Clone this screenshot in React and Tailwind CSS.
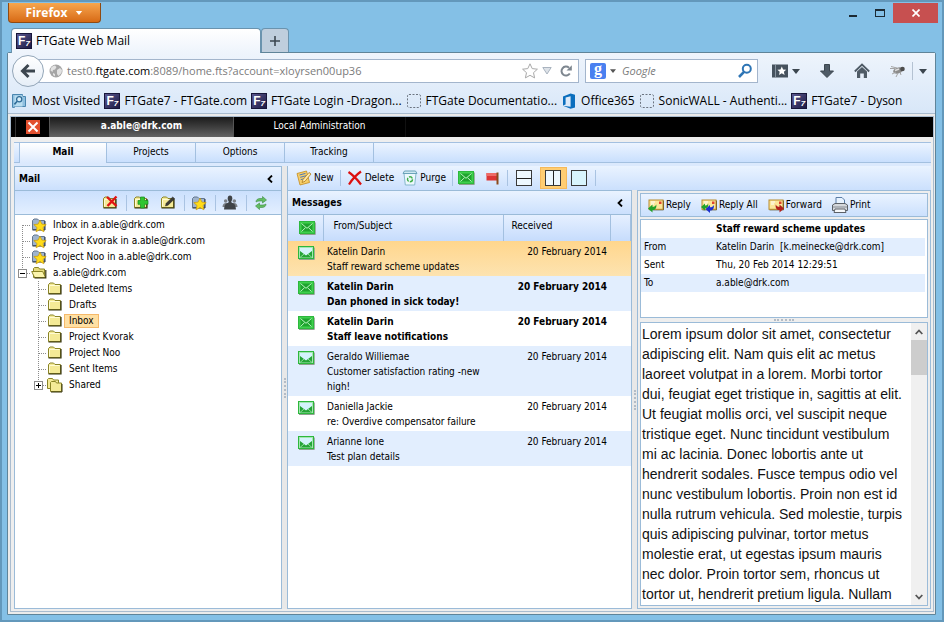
import React from 'react';

// bookmarks toolbar entries
const bookmarks = [
  { label: 'Most Visited', icon: 'visited' },
  { label: 'FTGate7 - FTGate.com', icon: 'ft' },
  { label: 'FTGate Login -Dragon...', icon: 'ft' },
  { label: 'FTGate Documentatio...', icon: 'blank' },
  { label: 'Office365', icon: 'office' },
  { label: 'SonicWALL - Authenti...', icon: 'blank' },
  { label: 'FTGate7 - Dyson', icon: 'ft' },
];

// folder tree, level 1 rows are indented one cell
const folders = [
  { name: 'Inbox in a.able@drk.com', level: 0, icon: 'star', branch: 'first' },
  { name: 'Project Kvorak in a.able@drk.com', level: 0, icon: 'star', branch: 'mid' },
  { name: 'Project Noo in a.able@drk.com', level: 0, icon: 'star', branch: 'mid' },
  { name: 'a.able@drk.com', level: 0, icon: 'open', branch: 'minus' },
  { name: 'Deleted Items', level: 1, icon: 'folder', branch: 'mid' },
  { name: 'Drafts', level: 1, icon: 'folder', branch: 'mid' },
  { name: 'Inbox', level: 1, icon: 'folder', branch: 'mid', selected: true },
  { name: 'Project Kvorak', level: 1, icon: 'folder', branch: 'mid' },
  { name: 'Project Noo', level: 1, icon: 'folder', branch: 'mid' },
  { name: 'Sent Items', level: 1, icon: 'folder', branch: 'mid' },
  { name: 'Shared', level: 1, icon: 'multi', branch: 'plus' },
];

const messages = [
  { from: 'Katelin Darin', subject: 'Staff reward scheme updates', date: '20 February 2014', read: true, selected: true },
  { from: 'Katelin Darin', subject: 'Dan phoned in sick today!', date: '20 February 2014', read: false },
  { from: 'Katelin Darin', subject: 'Staff leave notifications', date: '20 February 2014', read: false },
  { from: 'Geraldo Williemae', subject: 'Customer satisfaction rating -new high!', date: '20 February 2014', read: true },
  { from: 'Daniella Jackie', subject: 're: Overdive compensator failure', date: '20 February 2014', read: true },
  { from: 'Arianne Ione', subject: 'Test plan details', date: '20 February 2014', read: true },
];

const details = [
  { label: 'From', value: 'Katelin Darin\u00a0 [k.meinecke@drk.com]' },
  { label: 'Sent', value: 'Thu, 20 Feb 2014 12:29:51' },
  { label: 'To', value: 'a.able@drk.com' },
];

const bodyText =
  'Lorem ipsum dolor sit amet, consectetur adipiscing elit. Nam quis elit ac metus laoreet volutpat in a lorem. Morbi tortor dui, feugiat eget tristique in, sagittis at elit. Ut feugiat mollis orci, vel suscipit neque tristique eget. Nunc tincidunt vestibulum mi ac lacinia. Donec lobortis ante ut hendrerit sodales. Fusce tempus odio vel nunc vestibulum lobortis. Proin non est id nulla rutrum vehicula. Sed molestie, turpis quis adipiscing pulvinar, tortor metus molestie erat, ut egestas ipsum mauris nec dolor. Proin tortor sem, rhoncus ut tortor ut, hendrerit pretium ligula. Nullam';

/* ---------- icons ---------- */

function FtLogo() {
  return (
    <span className="flex h-4 w-4 shrink-0 items-center justify-center border border-[#17163a] bg-linear-to-br from-[#5c5990] to-[#1d1b45] font-['Liberation_Sans'] text-xs leading-none font-bold text-white">
      F<span className="self-end text-[8px] leading-none italic">7</span>
    </span>
  );
}

function BookmarkIcon({ kind }) {
  if (kind === 'ft') return <FtLogo />;
  if (kind === 'blank') {
    return (
      <svg className="h-4 w-4 shrink-0" viewBox="0 0 16 16">
        <rect x="1.5" y="1.5" width="13" height="13" rx="1.5" fill="none" stroke="#6c7480" strokeDasharray="2 1.5" />
      </svg>
    );
  }
  if (kind === 'office') {
    return (
      <svg className="h-4 w-4 shrink-0" viewBox="0 0 16 16">
        <path d="M2 3.6 9.6.4 14 1.8v12.6L9.6 15.7 2 12.7l7.6 1V3.3L4.6 4.5v6.9L2 12.5z" fill="#0a6ebd" />
      </svg>
    );
  }
  return (
    <svg className="h-4 w-4 shrink-0" viewBox="0 0 16 16">
      <path d="M.5 1.5h10v2h3v10H2.5v.9H.5z" fill="#8fc0e0" stroke="#4a86b0" />
      <path d="M2.5 13.5V2.5h8v11" fill="#b9ddf0" />
      <circle cx="7.2" cy="6.3" r="2.6" fill="#d8eefa" stroke="#2f6c98" strokeWidth="1.3" />
      <path d="M5.2 8.3 2.4 11.4" stroke="#2f6c98" strokeWidth="1.6" />
    </svg>
  );
}

// small downward triangle
function Caret({ className }) {
  return (
    <svg className={className} viewBox="0 0 8 5">
      <path d="M0 0h8L4 5z" fill="currentColor" />
    </svg>
  );
}

function Folder() {
  return (
    <>
      <path d="M1.5 12.5V3.500l1.500-1.500h3.500L8 3.500h5.500v9z" fill="#f4ea96" stroke="#8a8426" />
      <path d="M2.5 11.5V4.500h10" fill="none" stroke="#fffbd2" />
      <path d="M1.5 13h12.500V4" fill="none" stroke="#35330c" strokeWidth="1.200" />
    </>
  );
}

function FolderIcon({ kind }) {
  return (
    <svg className="h-4 w-4 shrink-0" viewBox="0 0 16 16">
      {kind === 'folder' && <Folder />}
      {kind === 'star' && (
        <>
          <path d="M1.5 12.5v-9L3 2h3.500L8 3.500h5.500v9z" fill="#9fb4cd" stroke="#62768f" />
          <path d="M1.5 13h12.500V4" fill="none" stroke="#2d3744" />
          <path d="m9 3.200 1.900 3.900 4.300.5-3.200 2.900.9 4.300L9 12.600l-3.900 2.200.9-4.300-3.200-2.900 4.300-.5z" fill="#ffdc1a" stroke="#c79a08" strokeWidth=".7" />
        </>
      )}
      {kind === 'open' && (
        <>
          <path d="M2.5 12.5v-9l1-1h4l1 1.500h5v8.500z" fill="#e5da7c" stroke="#8a8426" />
          <path d="M.7 6.5h11l2.8 6H3.6z" fill="#fbf4ac" stroke="#8a8426" />
          <path d="M3.5 13h11.300V5" fill="none" stroke="#35330c" strokeWidth="1.200" />
        </>
      )}
      {kind === 'multi' && (
        <>
          <path d="M.5 11.5v-9l1-1h4l1 1.500h5v8.500z" fill="#f4ea96" stroke="#8a8426" />
          <path d="M3.5 14.5v-9l1-1h4l1 1.500h5v8.500z" fill="#f4ea96" stroke="#8a8426" />
          <path d="M4 15h11V7" fill="none" stroke="#35330c" />
        </>
      )}
      {kind === 'delete' && (
        <>
          <Folder />
          <path d="m5 2 9.500 9M14.500 1.500 5.500 11" stroke="#e01414" strokeWidth="2.400" />
        </>
      )}
      {kind === 'add' && (
        <>
          <Folder />
          <path d="M7.500 5.500V2h4v3.500H15v3.800h-3.500V13h-4V9.300H5V5.500z" fill="#2fc531" stroke="#158a1b" strokeWidth=".7" />
        </>
      )}
      {kind === 'edit' && (
        <>
          <Folder />
          <path d="m5.500 11 .7-2.700L12.700 2l2 1.700L8 10.200z" fill="#3c3c34" stroke="#222" strokeWidth=".5" />
        </>
      )}
    </svg>
  );
}

// dotted connector in front of a tree row
function Branch({ kind }) {
  const box = kind === 'minus' || kind === 'plus';
  return (
    <svg className="h-4 w-4 shrink-0" viewBox="0 0 16 16">
      {kind === 'mid' && <path d="M7.5 0v16" stroke="#8c8c8c" strokeDasharray="1 1" />}
      {kind === 'first' && <path d="M7.5 8v8" stroke="#8c8c8c" strokeDasharray="1 1" />}
      {box && <path d="M7.5 0v4" stroke="#8c8c8c" strokeDasharray="1 1" />}
      <path d={box ? 'M12 8.5h4' : 'M8 8.5h8'} stroke="#8c8c8c" strokeDasharray="1 1" />
      {box && <rect x="3.5" y="4.5" width="8" height="8" fill="#fff" stroke="#8c8c8c" />}
      {box && <path d="M5 8.5h5" stroke="#000" />}
      {kind === 'plus' && <path d="M7.5 6v5" stroke="#000" />}
    </svg>
  );
}

function Envelope({ open }) {
  return (
    <svg className="block h-4 w-[18px] shrink-0" viewBox="0 0 18 16">
      <path d="M2 14.500h15.300V2.500" fill="none" stroke="#8fa08f" />
      <rect x="1.500" y="1.500" width="15" height="12" fill={open ? '#a5e6b2' : '#3fcf4d'} stroke="#2db83d" />
      {open ? (
        <>
          <path d="M3 3h12v3.500L9 11 3 6.500z" fill="#d3f3fb" />
          <path d="M3 6 9 10.500 15 6v6.500H3z" fill="#25a336" />
          <path d="m3 12.500 4-3.500M15 12.500 11 9" stroke="#8fe09b" />
        </>
      ) : (
        <>
          <path d="M3.500 3.500h11v8h-11z" fill="#1fa42f" />
          <path d="m3.500 3.500 5.500 4.800 5.500-4.800M3.500 11.500l4-3.800M14.500 11.500l-4-3.800" fill="none" stroke="#b9f5c0" />
        </>
      )}
    </svg>
  );
}

// shared letter card used by reply / reply all / forward
function Letter({ children }) {
  return (
    <svg className="h-4 w-4 shrink-0" viewBox="0 0 16 16">
      <path d="M1.5 12.8h14V3.5" fill="none" stroke="#4b4320" />
      <rect x="1" y="3" width="14" height="9.3" fill="#fbe79a" stroke="#b98b2c" />
      <path d="M3 5h4M3 7h3" stroke="#fff" />
      <path d="M11 4.5h2.5v2.5H11z" fill="#e0452c" />
      {children}
    </svg>
  );
}

const ReplyIcon = () => (
  <Letter>
    <path d="M0 11.5 4.5 7.5v2.3c2 0 3-.8 3.8-2.3.5 3.4-.8 5.5-3.8 5.6v2.4z" fill="#21a32a" />
  </Letter>
);

const ReplyAllIcon = () => (
  <Letter>
    <path d="M0 10 4 6.5v2c1.8 0 2.5-.6 3.2-2 .4 3-.6 4.8-3.2 5v2z" fill="#21a32a" />
    <path d="M4.5 12 9 8v2.2c2 0 3-.8 3.8-2.3.5 3.4-.8 5.5-3.8 5.6V16z" fill="#1a2fd0" />
  </Letter>
);

const ForwardIcon = () => (
  <Letter>
    <path d="M16 11.5 11.5 7.5v2.3c-2 0-3-.8-3.8-2.3-.5 3.4.8 5.5 3.8 5.6v2.4z" fill="#b3201c" />
  </Letter>
);

const PrintIcon = () => (
  <svg className="h-4 w-4 shrink-0" viewBox="0 0 16 16">
    <path d="M4 7V.5h6L12.500 3v4" fill="#e8f3ff" stroke="#5a7da6" />
    <path d="M.5 8 3 6.500h10L15.500 8v5.500H.5z" fill="#d5d8dc" stroke="#5c6168" />
    <path d="M1 10h14" stroke="#868c94" />
    <path d="m3 12-1 3.500h12L13 12z" fill="#f6f8fa" stroke="#5c6168" />
  </svg>
);

const NewIcon = () => (
  <svg className="h-4 w-4 shrink-0" viewBox="0 0 16 16">
    <path d="M1 3.500 10.500 1l3 11.500L4 15z" fill="#f7cf6a" stroke="#c48a1c" strokeWidth=".8" />
    <path d="m3.500 5 6-1.600M4.200 7.300l6-1.600M4.800 9.600l4-1" stroke="#4f79b8" />
    <path d="m6 12.500 1-3L13 2.500l2 1.500-6 7.300z" fill="#ffe9a8" stroke="#b07a18" strokeWidth=".8" />
  </svg>
);

const DeleteIcon = () => (
  <svg className="h-4 w-4 shrink-0" viewBox="0 0 16 16">
    <path d="M1.500 2C6 5 10 9 14 14.500M14 1.500C9 5 5 9.500 2 14.500" fill="none" stroke="#dc1010" strokeWidth="2.200" />
  </svg>
);

const PurgeIcon = () => (
  <svg className="h-4 w-4 shrink-0" viewBox="0 0 16 16">
    <path d="M2 3.500h12L12.700 15H3.300z" fill="#ecf8fc" stroke="#86b8cc" />
    <path d="M1 3.500 2.500 1h11L15 3.500z" fill="#cfe9f2" stroke="#6ba3ba" />
    <circle cx="8" cy="9.300" r="2.500" fill="none" stroke="#3fae48" strokeWidth="1.400" strokeDasharray="4 1.200" />
  </svg>
);

const FlagIcon = () => (
  <svg className="h-4 w-4 shrink-0" viewBox="0 0 16 16">
    <path d="M1.500 3h11v7.500h-11z" fill="#dc3535" />
    <path d="M1.500 3h11v3h-11z" fill="#ee6b66" />
    <path d="M12.500 2.500v12" stroke="#8a4a1c" strokeWidth="2" />
  </svg>
);

const SyncIcon = () => (
  <svg className="h-4 w-4 shrink-0" viewBox="0 0 16 16">
    <path d="M3 7c0-2.500 2-3.500 4-3.500h2.500v-2l4 3.500-4 3V6H7C5.500 6 4 6.200 3 7z" fill="#63bd63" stroke="#3d8c40" strokeWidth=".6" />
    <path d="M13 9c0 2.500-2 3.500-4 3.500H6.500v2l-4-3.500 4-3v2H9c1.500 0 3-.2 4-1z" fill="#63bd63" stroke="#3d8c40" strokeWidth=".6" />
  </svg>
);

const PeopleIcon = () => (
  <svg className="h-4 w-4 shrink-0" viewBox="0 0 16 16">
    <circle cx="3.700" cy="6" r="1.800" fill="#7b8086" />
    <circle cx="12.300" cy="6" r="1.800" fill="#7b8086" />
    <path d="M.5 12c0-2.500 1.500-4 3.200-4h8.600c1.700 0 3.200 1.500 3.200 4z" fill="#7b8086" />
    <ellipse cx="8" cy="3.400" rx="2.300" ry="2.900" fill="#3f4347" />
    <path d="M6.800 5.500h2.400l.3 2 2.500 1.300c1 .8 1.700 2.700 2 5.700H2c.3-3 1-4.900 2-5.700l2.500-1.300z" fill="#3f4347" />
  </svg>
);

// panel layout buttons: split horizontally, vertically or not at all
function LayoutIcon({ split }) {
  return (
    <svg className="h-4 w-4" viewBox="0 0 16 16">
      <rect x=".5" y=".5" width="15" height="15" fill={split === 'none' ? '#d8f4fd' : '#eef8ff'} stroke="#3a3a3a" />
      {split === 'rows' && <path d="M1 8.500h14" stroke="#222" />}
      {split === 'cols' && <path d="M8.500 1v14" stroke="#222" />}
    </svg>
  );
}

/* ---------- small building blocks ---------- */

function Sep() {
  return <span className="mr-1.5 ml-2 h-4 w-px shrink-0 bg-[#a9c3e2]" />;
}

function ToolButton({ icon, label, title }) {
  return (
    <button type="button" aria-label={label ? undefined : title} className="flex shrink-0 items-center gap-0.5">
      {icon}
      {label}
    </button>
  );
}

function PanelHeader({ title }) {
  return (
    <div className="flex h-6 shrink-0 items-center justify-between border-b border-[#9bbbd8] bg-linear-to-b from-[#eaf3ff] to-[#cbe0fd] pr-2 pl-1 font-bold">
      <h2>{title}</h2>
      <button type="button" aria-label={'Collapse ' + title}>
        <svg className="h-2 w-1.5" viewBox="0 0 6 8">
          <path d="M5 .5 1.500 4 5 7.500" fill="none" stroke="#000" strokeWidth="1.800" />
        </svg>
      </button>
    </div>
  );
}

/* ---------- browser chrome ---------- */

function TitleBar() {
  return (
    <div className="flex h-[25px] shrink-0 items-start justify-between pl-px">
      <button
        type="button"
        className="flex h-5 w-[93px] items-center justify-center gap-2 rounded-b border border-t-0 border-[#8f4a12] bg-linear-to-b from-[#f7a64c] to-[#d76a12] font-['Open_Sans',sans-serif] text-xs font-bold text-white"
      >
        Firefox
        <Caret className="h-1 w-2" />
      </button>
      <div className="-mr-0.5 flex items-center">
        <button type="button" aria-label="Minimize" className="flex h-5 w-7 items-end justify-center pb-1.5">
          <span className="h-[2px] w-2 bg-[#1c2a33]" />
        </button>
        <button type="button" aria-label="Maximize" className="flex h-5 w-[26px] items-center justify-center">
          <span className="h-2 w-2.5 border border-t-2 border-[#1c2a33]" />
        </button>
        <button type="button" aria-label="Close" className="flex h-5 w-[45px] items-center justify-center bg-[#c75050]">
          <svg className="h-2 w-2" viewBox="0 0 8 8">
            <path d="m.5.5 7 7m0-7-7 7" stroke="#fff" strokeWidth="1.700" />
          </svg>
        </button>
      </div>
    </div>
  );
}

function BrowserTabs() {
  return (
    <div className="relative z-10 flex h-6 shrink-0 pl-1">
      <div className="-mb-px flex w-[250px] items-center gap-1 rounded-t border border-b-0 border-[#6a93ae] bg-linear-to-b from-white to-[#eef4fc] pl-1 text-black">
        <FtLogo />
        FTGate Web Mail
      </div>
      <button type="button" aria-label="New tab" className="flex w-7 items-center justify-center rounded-t border border-b-0 border-[#6a93ae] bg-[#bfcedd]">
        <svg className="h-2.5 w-2.5" viewBox="0 0 10 10">
          <path d="M5 0v10M0 5h10" stroke="#3c4750" strokeWidth="1.600" />
        </svg>
      </button>
    </div>
  );
}

function NavBar() {
  return (
    <div className="flex items-center pt-0.5 pr-2 pl-1">
      <button
        type="button"
        aria-label="Back"
        className="relative z-10 -mr-4 flex h-8 w-8 shrink-0 items-center justify-center rounded-full border border-[#93a6b8] bg-linear-to-b from-white to-[#e6eef7]"
      >
        <svg className="h-4 w-4" viewBox="0 0 16 16">
          <path d="M15 8H3M8.500 2 2.500 8l6 6" fill="none" stroke="#3c464f" strokeWidth="3" />
        </svg>
      </button>
      <div className="flex h-6 min-w-0 grow items-center border border-[#a3b5cc] bg-white pr-1.5 pl-5 text-[11px] text-[#7b7b7b]">
        <svg className="h-3.5 w-3.5 shrink-0" viewBox="0 0 14 14">
          <circle cx="7" cy="7" r="6.500" fill="#a5a5a5" />
          <path d="M2 4c1-1.500 2.500-2.500 4-2.500L7.500 3 6 5.500 4 6 3.500 8 1.500 6.500zM8 6l3-2 2 2-.5 3L9.500 12 8 10zM4 9l2 1v2.500L4 11z" fill="#e2e2e2" />
        </svg>
        <div className="grow pl-1">
          test0.<span className="text-black">ftgate.com</span>:8089/home.fts?account=xloyrsen00up36
        </div>
        <svg className="h-4 w-4" viewBox="0 0 16 16">
          <path d="m8 .8 2.200 4.800 5.200.6-3.900 3.500 1.100 5.200L8 12.300l-4.600 2.600 1.100-5.200L.6 6.200l5.200-.6z" fill="#fff" stroke="#a9a9a9" />
        </svg>
        <svg className="mr-2 ml-1 h-2 w-2.5" viewBox="0 0 10 8">
          <path d="M.8.5h8.400L5 7z" fill="#dde2e8" stroke="#a9b3bf" />
        </svg>
        <button type="button" aria-label="Reload">
          <svg className="h-3 w-3" viewBox="0 0 12 12">
            <path d="M9.800 8.500A4.500 4.500 0 1 1 9 2.700" fill="none" stroke="#7d868f" strokeWidth="2" />
            <path d="M11.800.2v5.300H6.500z" fill="#7d868f" />
          </svg>
        </button>
      </div>
      <label className="mx-1.5 flex h-6 w-[173px] shrink-0 items-center border border-[#a3b5cc] bg-white pr-1 pl-1 text-[11px]">
        <span className="flex h-4 w-4 shrink-0 items-center justify-center rounded-xs bg-[#4a80f0] pb-1 font-['Liberation_Serif'] text-base leading-none font-bold text-white">g</span>
        <Caret className="mx-1 h-1 w-1.5 shrink-0 text-[#555]" />
        <input type="text" aria-label="Search" placeholder="Google" className="w-full min-w-0 pl-0.5 italic outline-none placeholder:text-[#7b7b7b]" />
        <svg className="h-4 w-4 shrink-0" viewBox="0 0 16 16">
          <circle cx="9.800" cy="5.800" r="4" fill="none" stroke="#2e75b5" strokeWidth="2" />
          <path d="M7 8.800 2 14" stroke="#2e75b5" strokeWidth="2.600" />
        </svg>
      </label>
      <div className="flex items-center pl-2 text-[#3c464f]">
        <svg className="h-4 w-4" viewBox="0 0 16 16">
          <path d="M0 1.500h16v13H0z" fill="#46525e" />
          <path d="M3.500 2v12" stroke="#8794a0" />
          <path d="m9.800 3.500 1.300 2.900 3.100.3-2.300 2.100.7 3.100-2.800-1.600L7 11.900l.7-3.100-2.300-2.100 3.100-.3z" fill="#fff" />
        </svg>
        <Caret className="ml-1 h-[5px] w-2" />
        <svg className="ml-5 h-3.5 w-3.5" viewBox="0 0 14 14">
          <path d="M4.500.5h5V7h4L7 13.500.5 7h4z" fill="#4f5b66" stroke="#3c464f" />
        </svg>
        <svg className="ml-5 h-4 w-4" viewBox="0 0 16 16">
          <path d="m.8 8.500 7.200-7 7.200 7" fill="none" stroke="#4f5b66" strokeWidth="1.800" />
          <path d="M3 8.500 8 4l5 4.500V15H9.800v-4.500H6.200V15H3z" fill="#4f5b66" />
        </svg>
        <svg className="ml-5 h-4 w-4" viewBox="0 0 16 16">
          <ellipse cx="8" cy="7.500" rx="5" ry="3" fill="#8b8b8b" transform="rotate(-18 8 7.500)" />
          <path d="M0 5.500h5M2 11l4-2M6 14l2-4M11 12l-1-3M1 3.500l6 1.500" stroke="#a5a5a5" />
          <circle cx="12.500" cy="6" r="2.300" fill="#4d4d4d" />
          <path d="M5 7.500 9 6" stroke="#ddd" strokeWidth="1.500" />
        </svg>
        <span className="ml-1.5 h-[18px] w-px bg-[#b4c2d2]" />
        <Caret className="ml-1.5 h-[5px] w-2" />
      </div>
    </div>
  );
}

function Bookmarks() {
  return (
    <nav className="flex items-center gap-1 px-1 pt-1.5 text-black">
      {bookmarks.map((b) => (
        <a key={b.label} href="#" className="flex shrink-0 items-center gap-1 whitespace-nowrap">
          <BookmarkIcon kind={b.icon} />
          {b.label}
        </a>
      ))}
    </nav>
  );
}

/* ---------- mail application ---------- */

function AccountBar() {
  return (
    <div className="flex h-5 shrink-0 items-stretch bg-black text-white">
      <button type="button" aria-label="Log out" className="ml-1 flex w-[34px] items-center justify-center border-l border-[#333]">
        <svg className="h-3.5 w-3.5" viewBox="0 0 14 14">
          <rect width="14" height="14" fill="#e2502f" />
          <path d="m2.500 2.500 9 9m0-9-9 9" stroke="#fff" strokeWidth="2" />
        </svg>
      </button>
      <button type="button" className="w-[185px] border-x border-[#555] bg-linear-to-b from-[#1c1c1c] to-[#636363] pb-0.5 font-bold">
        a.able@drk.com
      </button>
      <button type="button" className="w-[172px] border-r border-[#111] pb-0.5">
        Local Administration
      </button>
    </div>
  );
}

function AppTabs() {
  return (
    <div className="flex h-[21px] shrink-0 border-y border-[#a3c0e0] bg-linear-to-b from-[#ecf4ff] to-[#c9dffd]">
      <span className="w-1.5 border-r border-[#a3c0e0]" />
      <button type="button" className="-mb-px w-[87px] border-r border-[#a3c0e0] bg-linear-to-b from-white to-[#dbe9fd] pb-0.5 font-bold">
        Mail
      </button>
      {['Projects', 'Options', 'Tracking'].map((t) => (
        <button key={t} type="button" className="w-[89px] border-r border-[#a3c0e0] pb-px">
          {t}
        </button>
      ))}
    </div>
  );
}

function FolderPanel() {
  return (
    <section className="flex w-[268px] shrink-0 flex-col border border-[#9bbbd8] bg-white">
      <PanelHeader title="Mail" />
      <div className="flex h-6 shrink-0 items-center justify-end border-b border-[#9bbbd8] bg-linear-to-b from-[#cbe0fd] to-[#e3efff] pr-3">
        <ToolButton icon={<FolderIcon kind="delete" />} title="Delete folder" />
        <Sep />
        <ToolButton icon={<FolderIcon kind="add" />} title="New folder" />
        <span className="w-[11px]" />
        <ToolButton icon={<FolderIcon kind="edit" />} title="Rename folder" />
        <Sep />
        <ToolButton icon={<FolderIcon kind="star" />} title="Favourite" />
        <Sep />
        <ToolButton icon={<PeopleIcon />} title="Share" />
        <Sep />
        <ToolButton icon={<SyncIcon />} title="Refresh" />
      </div>
      <ul className="pt-0.5">
        {folders.map((f) => (
          <li key={f.name} className={f.level ? 'flex h-4 items-center pl-4' : 'flex h-4 items-center'}>
            <Branch kind={f.branch} />
            <FolderIcon kind={f.icon} />
            <a
              href="#"
              className={
                f.selected
                  ? 'ml-px border border-[#f5b96a] bg-[#ffe0a3] px-1 leading-3'
                  : 'ml-px border border-transparent px-1 leading-3'
              }
            >
              {f.name}
            </a>
          </li>
        ))}
      </ul>
    </section>
  );
}

function MailToolbar() {
  return (
    <div className="flex h-6 shrink-0 items-center border-l border-[#9bbbd8] bg-linear-to-b from-[#eaf3ff] to-[#cbe0fd] pl-2">
      <ToolButton icon={<NewIcon />} label="New" />
      <span className="mx-1.5 h-4 w-px bg-[#a9c3e2]" />
      <ToolButton icon={<DeleteIcon />} label="Delete" />
      <span className="w-2" />
      <ToolButton icon={<PurgeIcon />} label="Purge" />
      <span className="mr-1 ml-1.5 h-4 w-px bg-[#a9c3e2]" />
      <ToolButton icon={<Envelope />} title="Mark read" />
      <span className="w-2.5" />
      <ToolButton icon={<FlagIcon />} title="Flag" />
      <span className="mr-2 ml-1.5 h-4 w-px bg-[#a9c3e2]" />
      <button type="button" aria-label="Split rows"><LayoutIcon split="rows" /></button>
      <button type="button" aria-label="Split columns" className="mr-1 ml-2 flex h-[22px] w-[27px] items-center justify-center border border-[#f5b95a] bg-[#ffcd72]">
        <LayoutIcon split="cols" />
      </button>
      <button type="button" aria-label="No preview"><LayoutIcon split="none" /></button>
      <span className="ml-2 h-4 w-px bg-[#a9c3e2]" />
    </div>
  );
}

function MessageList() {
  return (
    <section className="flex grow flex-col border border-[#9bbbd8] bg-white">
      <PanelHeader title="Messages" />
      <table className="w-full table-fixed border-collapse">
        <colgroup>
          <col className="w-[35px]" />
          <col className="w-[180px]" />
          <col className="w-[107px]" />
          <col />
        </colgroup>
        <thead>
          <tr className="h-[26px] bg-linear-to-b from-[#e6f0ff] to-[#c6dcfc] text-left">
            <th className="border-r border-[#a3c0e0] pl-2.5" aria-label="Status"><Envelope /></th>
            <th className="border-r border-[#a3c0e0] pb-1 pl-2.5 font-normal">From/Subject</th>
            <th className="border-r border-[#a3c0e0] pb-1 pl-2 font-normal">Received</th>
            <th className="border-r border-[#a3c0e0]" aria-label="Flag"></th>
          </tr>
        </thead>
        <tbody>
          {messages.map((m, i) => {
            let row = i % 2 ? 'bg-[#e2eefe]' : 'bg-white';
            if (m.selected) row = 'bg-linear-to-b from-[#ffd68c] to-[#fde3b0]';
            if (!m.read) row += ' font-bold';
            return (
              <tr key={i} className={row + ' align-top leading-[15px]'}>
                <td className="pt-1 pl-[9px]"><Envelope open={m.read} /></td>
                <td className="pt-[3px] pr-3 pb-[2px] pl-1">
                  {m.from}
                  <br />
                  {m.subject}
                </td>
                <td className="pt-[3px] pr-[3px] text-right whitespace-nowrap">{m.date}</td>
                <td></td>
              </tr>
            );
          })}
        </tbody>
      </table>
    </section>
  );
}

// grip dots in the middle of a vertical splitter
function Splitter() {
  return (
    <div className="flex w-[5px] shrink-0 items-center justify-center bg-[#e8e8e8]">
      <span className="h-5 border-l-2 border-dotted border-[#b4bcc6]" />
    </div>
  );
}

function PreviewPanel() {
  return (
    <section className="flex w-[294px] shrink-0 flex-col border border-[#9bbbd8] bg-[#eeeeee] p-0.5">
      <div className="flex h-6 shrink-0 items-center gap-2.5 border border-[#9bbbd8] bg-linear-to-b from-[#eaf3ff] to-[#cbe0fd] pl-[7px]">
        <ToolButton icon={<ReplyIcon />} label="Reply" />
        <ToolButton icon={<ReplyAllIcon />} label="Reply All" />
        <ToolButton icon={<ForwardIcon />} label="Forward" />
        <ToolButton icon={<PrintIcon />} label="Print" />
      </div>
      <div className="mt-0.5 h-[99px] shrink-0 border border-[#9bbbd8] bg-white pr-0.5">
        <table className="w-full">
          <tbody>
            <tr className="h-[18px]">
              <td className="w-[75px]"></td>
              <td className="font-bold">Staff reward scheme updates</td>
            </tr>
            {details.map((d, i) => (
              <tr key={d.label} className={i % 2 ? 'h-[18px] bg-white' : 'h-[18px] bg-[#e2eefe]'}>
                <th scope="row" className="pl-[3px] text-left font-normal">{d.label}</th>
                <td>{d.value}</td>
              </tr>
            ))}
          </tbody>
        </table>
      </div>
      <div className="flex h-1 shrink-0 items-center justify-center">
        <span className="w-5 border-t-2 border-dotted border-[#b4bcc6]" />
      </div>
      <div className="flex min-h-0 grow border border-[#9bbbd8] bg-white">
        <p className="grow overflow-hidden pt-px pr-1 pl-px font-['Liberation_Sans',sans-serif] text-sm leading-5 text-[#111]">
          {bodyText}
        </p>
        <div className="flex w-4 shrink-0 flex-col items-center bg-[#f0f0f0]">
          <button type="button" aria-label="Scroll up" className="flex h-[17px] items-center">
            <svg className="h-2 w-2" viewBox="0 0 8 8">
              <path d="m.7 6 3.300-3.500L7.300 6" fill="none" stroke="#555" strokeWidth="1.800" />
            </svg>
          </button>
          <div className="h-[35px] w-full bg-[#cdcdcd]" />
          <button type="button" aria-label="Scroll down" className="mt-auto flex h-[17px] items-center">
            <svg className="h-2 w-2" viewBox="0 0 8 8">
              <path d="M.7 2 4 5.500 7.300 2" fill="none" stroke="#555" strokeWidth="1.800" />
            </svg>
          </button>
        </div>
      </div>
    </section>
  );
}

export default function App() {
  return (
    <div className="flex h-screen flex-col border-2 border-[#6398bb] bg-[#84c0e6] pt-px pr-1.5 pb-[5px] pl-[5px] font-['Open_Sans',sans-serif] text-xs">
      <TitleBar />
      <BrowserTabs />
      <div className="flex min-h-0 grow flex-col rounded-t-xs border border-[#5f8499] bg-[#ebebeb]">
        <header className="h-[61px] shrink-0 border-b border-[#a9bccf] bg-linear-to-b from-[#eef4fc] to-[#d8e7f8]">
          <NavBar />
          <Bookmarks />
        </header>

        <main className="mt-0.5 mr-px mb-0.5 ml-0.5 flex min-h-0 grow flex-col border border-[#a9bccf] bg-[#eeeeee] font-['DejaVu_Sans_Condensed','DejaVu_Sans',sans-serif] text-[10px] text-black">
          <AccountBar />
          <div className="mt-[5px] mr-0.5 mb-0.5 ml-[3px] flex min-h-0 grow flex-col">
            <AppTabs />
            <div className="h-[3px] shrink-0 bg-[#dbe9fd]" />
            <div className="flex min-h-0 grow">
              <FolderPanel />
              <Splitter />
              <div className="flex min-w-0 grow flex-col">
                <MailToolbar />
                <div className="flex min-h-0 grow">
                  <MessageList />
                  <Splitter />
                  <PreviewPanel />
                </div>
              </div>
            </div>
          </div>
        </main>
      </div>
    </div>
  );
}
